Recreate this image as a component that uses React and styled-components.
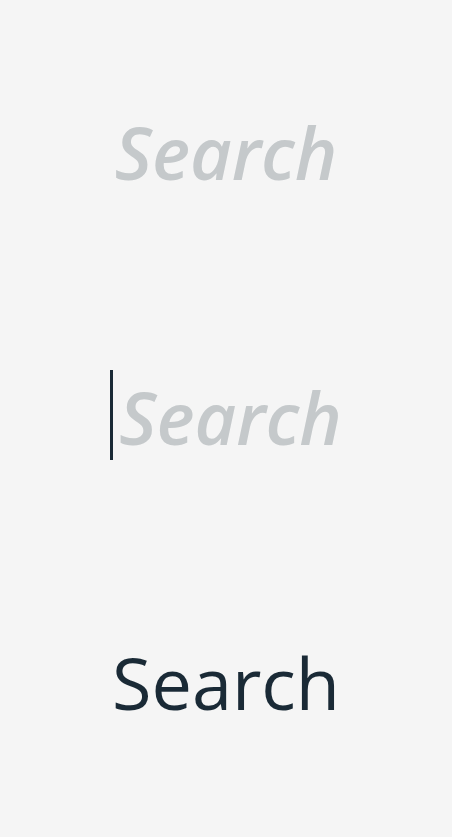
import React from "react";
import styled, { createGlobalStyle } from "styled-components";

const Global = createGlobalStyle`
  html, body { margin: 0; padding: 0; background: #f5f5f5; }
  body { font-family: "Open Sans", sans-serif; }
`;

const Page = styled.div`
  width: 452px;
  height: 837px;
  display: flex;
  flex-direction: column;
  align-items: center;
  padding-top: 107px;
  gap: 175px;
  box-sizing: border-box;
`;

const Field = styled.div`
  height: 90px;
  display: flex;
  align-items: center;
  justify-content: center;
  font-family: "Open Sans", sans-serif;
  font-size: 72px;
  line-height: 90px;
  white-space: nowrap;
  font-style: ${(p) => (p.$placeholder ? "italic" : "normal")};
  font-weight: ${(p) => (p.$placeholder ? 600 : 400)};
  color: ${(p) => (p.$placeholder ? "#c5c9cb" : "#1a2a36")};
`;

const Caret = styled.span`
  display: inline-block;
  width: 3px;
  height: 90px;
  background: #1a2a36;
  margin-right: 6px;
  margin-bottom: 4px;
`;

export default function App() {
  return (
    <>
      <Global />
      <Page>
        <Field $placeholder>Search</Field>
        <Field $placeholder>
          <Caret />
          Search
        </Field>
        <Field>Search</Field>
      </Page>
    </>
  );
}
